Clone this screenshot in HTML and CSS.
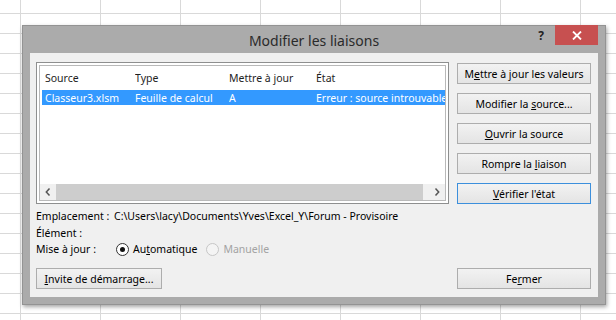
FILE: index.html
```html
<!DOCTYPE html>
<html lang="fr">
<head>
    <meta charset="UTF-8">
    <meta name="viewport" content="width=device-width, initial-scale=1.0">
    <title>Modifier les liaisons</title>
    <link rel="stylesheet" href="styles.css">
</head>
<body>

    <div class="dialog">
        <div class="titlebar">
            <div class="title">Modifier les liaisons</div>
            <div class="controls">
                <span class="help">?</span>
                <span class="close">
                    <svg width="10" height="9" viewBox="0 0 10 9"><path d="M1 0.5 L9 8.5 M9 0.5 L1 8.5" stroke="#fff" stroke-width="1.8"/></svg>
                </span>
            </div>
        </div>

        <div class="client">
            <div class="top">
                <div class="left">
                    <div class="listbox">
                        <div class="listview">
                            <div class="head">
                                <span>Source</span>
                                <span>Type</span>
                                <span>Mettre à jour</span>
                                <span>État</span>
                            </div>
                            <div class="row selected">
                                <span>Classeur3.xlsm</span>
                                <span>Feuille de calcul</span>
                                <span>A</span>
                                <span>Erreur : source introuvable</span>
                            </div>
                            <div class="hscroll">
                                <span class="arrow">
                                    <svg width="6" height="8" viewBox="0 0 6 8"><path d="M4.5 0.5 L1.3 4 L4.5 7.5" fill="none" stroke="#555" stroke-width="1.5"/></svg>
                                </span>
                                <span class="thumb"></span>
                                <span class="track"></span>
                                <span class="arrow">
                                    <svg width="6" height="8" viewBox="0 0 6 8"><path d="M1.5 0.5 L4.7 4 L1.5 7.5" fill="none" stroke="#555" stroke-width="1.5"/></svg>
                                </span>
                            </div>
                        </div>
                    </div>

                    <div class="info">
                        <span>Emplacement :</span>
                        <span>C:\Users\lacy\Documents\Yves\Excel_Y\Forum - Provisoire</span>
                        <span>Élément :</span>
                        <span></span>
                        <span>Mise à jour :</span>
                        <span class="radios">
                            <span class="radio checked"></span>
                            <span>Au<u>t</u>omatique</span>
                            <span class="radio disabled"></span>
                            <span class="muted">Manuelle</span>
                        </span>
                    </div>
                </div>

                <div class="side">
                    <button type="button">M<u>e</u>ttre à jour les valeurs</button>
                    <button type="button">Modifier la <u>s</u>ource...</button>
                    <button type="button"><u>O</u>uvrir la source</button>
                    <button type="button">Rompre la <u>l</u>iaison</button>
                    <button type="button" class="focus"><u>V</u>érifier l'état</button>
                </div>
            </div>

            <div class="footer">
                <button type="button" class="wide"><u>I</u>nvite de démarrage...</button>
                <button type="button">Fe<u>r</u>mer</button>
            </div>
        </div>
    </div>

</body>
</html>
```

FILE: styles.css
```css
body {
    margin: 0;
    width: 616px;
    height: 320px;
    overflow: hidden;
    font-family: "Noto Sans", Arial, sans-serif;
    font-size: 10.5px;
    color: #000;
    background-color: #fff;
    background-image:
        linear-gradient(to right, #d9d9d9 1px, transparent 1px),
        linear-gradient(to bottom, #d9d9d9 1px, transparent 1px);
    background-size: 80px 20px;
    background-position: 20px 13px;
}

/* the dialog window floats over the sheet */
.dialog {
    position: absolute;
    left: 22px;
    top: 25px;
    width: 584px;
    height: 280px;
    box-sizing: border-box;
    background: #ababab;
    border: 1px solid #939393;
    box-shadow: 1px 2px 4px rgba(0, 0, 0, 0.35);
    display: flex;
    flex-direction: column;
}
.titlebar {
    height: 27px;
    display: grid;
    grid-template-columns: 1fr auto 1fr;
}
.title {
    grid-column: 2;
    font-size: 14px;
    color: #2a2a2a;
    padding-top: 5px;
}
.controls {
    grid-column: 3;
    justify-self: end;
    display: flex;
    align-items: flex-start;
    margin-top: -1px;
    margin-right: 7px;
}
.help {
    font-weight: bold;
    font-size: 12px;
    color: #222;
    margin: 2px 11px 0 0;
}
.close {
    width: 43px;
    height: 20px;
    background: #c75050;
    display: flex;
    align-items: center;
    justify-content: center;
}

.client {
    flex: 1;
    margin: 0 7px 7px;
    background: #f0f0f0;
    padding: 9px 7px 8px 6px;
    display: flex;
    flex-direction: column;
}
.top {
    display: flex;
    gap: 8px;
}
.left {
    width: 413px;
}

.listbox {
    height: 142px;
    box-sizing: border-box;
    border: 1px solid #8e8f8f;
    padding: 2px;
    background: #fff;
}
.listview {
    height: 100%;
    box-sizing: border-box;
    border: 1px solid #b9b9b9;
    display: flex;
    flex-direction: column;
}
.head,
.row {
    display: grid;
    grid-template-columns: 90px 94px 87px 1fr;
    white-space: nowrap;
}
.head {
    height: 23px;
    align-items: center;
    padding-left: 5px;
    color: #1e1e1e;
}
.row {
    height: 15px;
    align-items: center;
    margin: 1px 0 0 2px;
    padding-left: 3px;
}
.row span,
.head span {
    overflow: hidden;
}
.selected {
    background: #3399ff;
    color: #fff;
}

.hscroll {
    margin-top: auto;
    height: 16px;
    display: flex;
    background: #f0f0f0;
}
.arrow {
    width: 16px;
    display: flex;
    align-items: center;
    justify-content: center;
}
.thumb {
    width: 367px;
    background: #cdcdcd;
}
.track {
    flex: 1;
}

.info {
    display: grid;
    grid-template-columns: 78px 1fr;
    grid-auto-rows: 16.5px;
    align-items: center;
    margin-top: 4px;
    white-space: nowrap;
}
.radios {
    display: flex;
    align-items: center;
}
.radio {
    width: 11px;
    height: 11px;
    border: 1px solid #333;
    border-radius: 50%;
    background: #fff;
    margin: 0 4px 0 2px;
    box-sizing: content-box;
    display: flex;
    align-items: center;
    justify-content: center;
}
.radio.checked::after {
    content: "";
    width: 5px;
    height: 5px;
    border-radius: 50%;
    background: #111;
}
.radio.disabled {
    border-color: #c6c6c6;
    background: #f4f4f4;
    margin-left: 9px;
}
.muted {
    color: #a3a3a3;
}

.side {
    width: 134px;
    display: flex;
    flex-direction: column;
    gap: 9px;
    margin-top: 1px;
}
button {
    height: 21px;
    width: 134px;
    box-sizing: border-box;
    padding: 0;
    border: 1px solid #adadad;
    background: linear-gradient(#f2f2f2, #e4e4e4);
    font-family: "Noto Sans", Arial, sans-serif;
    font-size: 10.5px;
    color: #000;
}
button.focus {
    border-color: #3c8fdc;
}
button.wide {
    width: 126px;
}

.footer {
    margin-top: auto;
    display: flex;
    justify-content: space-between;
}
```
